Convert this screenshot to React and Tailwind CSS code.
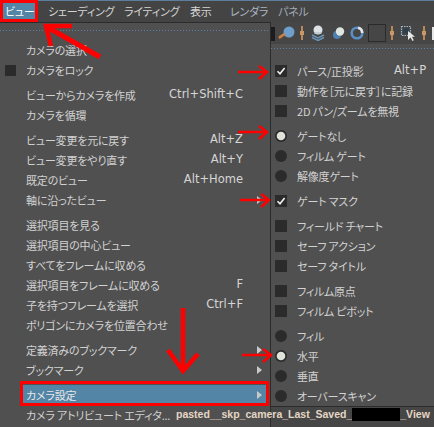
import React from 'react';

const mainMenu = [
  { label: 'カメラの選択' },
  { label: 'カメラをロック', box: true },
  'sep',
  { label: 'ビューからカメラを作成', keys: 'Ctrl+Shift+C' },
  { label: 'カメラを循環' },
  'sep',
  { label: 'ビュー変更を元に戻す', keys: 'Alt+Z' },
  { label: 'ビュー変更をやり直す', keys: 'Alt+Y' },
  { label: '既定のビュー', keys: 'Alt+Home' },
  { label: '軸に沿ったビュー', sub: true },
  'sep',
  { label: '選択項目を見る' },
  { label: '選択項目の中心ビュー' },
  { label: 'すべてをフレームに収める' },
  { label: '選択項目をフレームに収める', keys: 'F' },
  { label: '子を持つフレームを選択', keys: 'Ctrl+F' },
  { label: 'ポリゴンにカメラを位置合わせ' },
  'sep',
  { label: '定義済みのブックマーク', sub: true },
  { label: 'ブックマーク', sub: true },
  'sep',
  { label: 'カメラ設定', sub: true, active: true },
  { label: 'カメラ アトリビュート エディタ...' },
];

const cameraMenu = [
  { label: 'パース/正投影', type: 'check', on: true, keys: 'Alt+P' },
  { label: '動作を［元に戻す］に記録', type: 'check' },
  { label: '2D パン/ズームを無視', type: 'check' },
  'sep',
  { label: 'ゲートなし', type: 'radio', on: true },
  { label: 'フィルム ゲート', type: 'radio' },
  { label: '解像度ゲート', type: 'radio' },
  'sep',
  { label: 'ゲート マスク', type: 'check', on: true },
  'sep',
  { label: 'フィールド チャート', type: 'check' },
  { label: 'セーフ アクション', type: 'check' },
  { label: 'セーフ タイトル', type: 'check' },
  'sep',
  { label: 'フィルム原点', type: 'check' },
  { label: 'フィルム ピボット', type: 'check' },
  'sep',
  { label: 'フィル', type: 'radio' },
  { label: '水平', type: 'radio', on: true },
  { label: '垂直', type: 'radio' },
  { label: 'オーバースキャン', type: 'radio' },
];

function Dotted() {
  return (
    <svg width="100%" height="1" className="block">
      <line x1="0" y1="0.5" x2="100%" y2="0.5" stroke="#5b82a6" strokeDasharray="1 2" />
    </svg>
  );
}

function SubArrow() {
  return (
    <svg width="5" height="8" viewBox="0 0 5 8" className="block">
      <polygon points="0,0 5,4 0,8" fill="#c9c9c9" />
    </svg>
  );
}

function MainRow({ item }) {
  if (item.active) {
    return (
      <div className="h-5 flex items-center ml-[21px] mr-[2px] bg-[#5285a6] text-[#e8e8e8]">
        <div className="w-[5px] shrink-0" />
        <div className="flex-1 whitespace-nowrap">{item.label}</div>
        <div className="w-[25px] shrink-0 pl-[14px]">
          <SubArrow />
        </div>
      </div>
    );
  }
  return (
    <div className="h-5 flex items-center">
      <div className="w-[26px] shrink-0 pl-[5px]">
        {item.box && <div className="w-[11px] h-[11px] bg-[#2b2b2b]" />}
      </div>
      <div className="flex-1 whitespace-nowrap">{item.label}</div>
      {item.keys && (
        <div className="font-['DejaVu_Sans',sans-serif] text-[11.5px] tracking-normal text-[#d6d6d6] whitespace-nowrap">
          {item.keys}
        </div>
      )}
      <div className="w-[27px] shrink-0 pl-[14px]">{item.sub && <SubArrow />}</div>
    </div>
  );
}

function Mark({ item }) {
  if (item.type === 'radio') {
    return (
      <svg width="12" height="12" viewBox="0 0 12 12" className="block">
        <circle cx="6" cy="6" r="6" fill="#2b2b2b" />
        {item.on && <circle cx="6" cy="6" r="4.3" fill="#dfe3da" />}
      </svg>
    );
  }
  return (
    <svg width="12" height="12" viewBox="0 0 12 12" className="block">
      <rect width="12" height="12" fill="#2b2b2b" />
      {item.on && (
        <path d="M2.5 6.3 L5 8.8 L9.6 3" fill="none" stroke="#f2f2f2" strokeWidth="1.6" />
      )}
    </svg>
  );
}

function SubRow({ item }) {
  return (
    <div className="h-5 flex items-center">
      <div className="w-[26px] shrink-0 pl-[4px]">
        <Mark item={item} />
      </div>
      <div className="w-[97px] shrink-0 whitespace-nowrap">{item.label}</div>
      {item.keys && (
        <div className="font-['DejaVu_Sans',sans-serif] text-[11.5px] tracking-normal text-[#d6d6d6] whitespace-nowrap">
          {item.keys}
        </div>
      )}
    </div>
  );
}

function Tick() {
  return (
    <svg width="4" height="16" viewBox="0 0 4 16" className="block">
      <rect x="1" y="1" width="2" height="14" fill="#b9875a" />
      <rect x="0" y="6" width="4" height="4" fill="#c99866" />
    </svg>
  );
}

function Toolbar() {
  return (
    <div className="h-[22px] flex items-center">
      <div className="w-[4px] h-[14px] bg-[#1c1c1c] mt-[2px]" />
      <svg width="17" height="16" viewBox="0 0 17 16" className="block ml-[3px]">
        <circle cx="11" cy="7" r="5.5" fill="#6e9fcc" />
        <path d="M1 13 L7 9" stroke="#c7834c" strokeWidth="3" />
        <path d="M2 14 L6 11" stroke="#7a4a2a" strokeWidth="1" />
      </svg>
      <div className="ml-[5px]">
        <Tick />
      </div>
      <svg width="14" height="16" viewBox="0 0 14 16" className="block ml-[7px]">
        <circle cx="7" cy="5" r="4.5" fill="#dde3e4" />
        <path d="M1 10 L7 13 L13 10" fill="none" stroke="#6b93b8" strokeWidth="1.5" />
        <path d="M1 12.5 L7 15.5 L13 12.5" fill="none" stroke="#6b93b8" strokeWidth="1.5" />
        <path d="M3 8 L11 8" stroke="#aab8c0" strokeWidth="1" />
      </svg>
      <svg width="13" height="14" viewBox="0 0 13 14" className="block ml-[7px]">
        <circle cx="5" cy="9" r="4" fill="#4f7fae" />
        <circle cx="8" cy="5.5" r="4.2" fill="#dfe5e0" />
      </svg>
      <svg width="14" height="14" viewBox="0 0 14 14" className="block ml-[5px]">
        <circle cx="7" cy="7" r="5.3" fill="none" stroke="#5b8fc4" strokeWidth="2.6" />
        <path d="M8 1.8 A5.3 5.3 0 0 1 12.2 7" fill="none" stroke="#e6e6e6" strokeWidth="2.6" />
      </svg>
      <div className="ml-[4px] w-[18px] h-[18px] border border-[#2a2a2a]" />
      <div className="ml-[4px]">
        <Tick />
      </div>
      <svg width="16" height="16" viewBox="0 0 16 16" className="block ml-[6px]">
        <rect x="1.5" y="1.5" width="9" height="9" fill="none" stroke="#9fb8cf" strokeWidth="1.2" strokeDasharray="1.5 1" />
        <rect x="3.5" y="3.5" width="5" height="5" fill="#2d3e50" />
        <path d="M8 6 L8 15 L10.5 12.5 L12.5 16 L13.8 15.3 L12 11.8 L15 11.8 Z" fill="#e8e8e8" />
      </svg>
      <div className="ml-[6px]">
        <Tick />
      </div>
      <div className="ml-[6px] w-[12px] h-[13px] bg-[#e8e8e8] p-[3px]">
        <div className="w-full h-full bg-[#222]" />
      </div>
    </div>
  );
}

function Annotations() {
  const red = '#ff0000';
  return (
    <svg className="absolute inset-0 pointer-events-none" width="434" height="427" viewBox="0 0 434 427">
      <rect x="1.5" y="1.5" width="35" height="19" fill="none" stroke={red} strokeWidth="3" />
      <rect x="21.5" y="382.5" width="246" height="22" fill="none" stroke={red} strokeWidth="3" />
      {/* top-left thick arrow */}
      <path d="M47 27 L100 57" stroke={red} strokeWidth="5" />
      <path d="M72 26 L46 26 L51 46" fill="none" stroke={red} strokeWidth="4.5" />
      {/* big down arrow */}
      <path d="M183 308 L183 372" stroke={red} strokeWidth="4.5" />
      <path d="M168 350 L183 371 L198 354" fill="none" stroke={red} strokeWidth="4.5" />
      {/* thin arrows */}
      {[
        [238, 72],
        [238, 132],
        [240, 200],
        [242, 355],
      ].map(([x, y]) => (
        <g key={y}>
          <path d={`M${x} ${y} L${x + 29} ${y}`} stroke={red} strokeWidth="2.5" />
          <path d={`M${x + 21} ${y - 6} L${x + 29} ${y} L${x + 21} ${y + 7}`} fill="none" stroke={red} strokeWidth="2.5" />
        </g>
      ))}
    </svg>
  );
}

export default function App() {
  return (
    <div className="w-[434px] h-[427px] relative overflow-hidden bg-[#464646] text-[#d2d2d2] text-[11px] tracking-[-0.2px] leading-none font-['Noto_Sans_CJK_JP',sans-serif] [font-feature-settings:'palt']">
      {/* menu bar */}
      <div className="h-[22px] flex items-center border-t border-[#5c7d9b] bg-[#444444] text-[#d4d4d4] whitespace-nowrap">
        <div className="w-[38px] h-full flex items-center pl-[5px] bg-[#5285a6] text-white">ビュー</div>
        <div className="w-[86px] pl-[10px]">シェーディング</div>
        <div className="w-[66px]">ライティング</div>
        <div className="w-[40px]">表示</div>
        <div className="w-[48px] text-[#a9b5c1]">レンダラ</div>
        <div className="text-[#a3adb7]">パネル</div>
      </div>

      <div className="flex h-[405px]">
        {/* view menu */}
        <div className="w-[271px] h-full shrink-0 bg-[#505050] border-t border-r border-[#2b2b2b]">
          <div className="pt-[7px]">
            <Dotted />
          </div>
          <div className="mt-[9px]">
            {mainMenu.map((item, i) =>
              item === 'sep' ? <div key={i} className="h-[5px]" /> : <MainRow key={i} item={item} />
            )}
          </div>
        </div>

        {/* toolbar + camera settings submenu */}
        <div className="flex-1 flex flex-col">
          <Toolbar />
          <div className="w-[200px] bg-[#505050] border-b border-[#2b2b2b]">
            <div className="pt-[4px]">
              <Dotted />
            </div>
            <div className="mt-[12px]">
              {cameraMenu.map((item, i) =>
                item === 'sep' ? <div key={i} className="h-[5px]" /> : <SubRow key={i} item={item} />
              )}
            </div>
          </div>
        </div>
      </div>

      {/* camera name label in the viewport */}
      <div className="absolute left-[176px] top-[408px] flex items-center font-['Liberation_Sans',sans-serif] font-bold text-[10.5px] tracking-normal text-[#e4d6c4] [font-feature-settings:normal]">
        <span>pasted__skp_camera_Last_Saved_</span>
        <span className="w-[48px] h-[13px] bg-black" />
        <span>_View</span>
      </div>

      <Annotations />
    </div>
  );
}
